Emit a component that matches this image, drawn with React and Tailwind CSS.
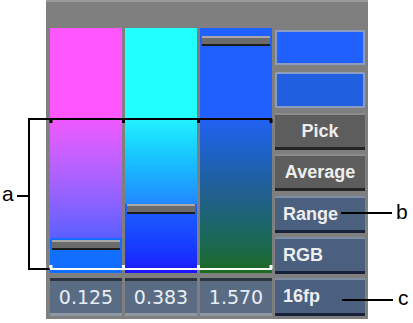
const btnFont = { fontFamily: '"Liberation Sans", Arial, sans-serif' };
const labelFont = { fontFamily: '"Liberation Sans", Arial, sans-serif' };

function Column({ handleTop, children }) {
  return (
    <div className="relative w-[72px] h-[245px] overflow-hidden flex flex-col">
      {children}
      <div
        className="absolute left-[2px] right-[2px] h-[10px] bg-[#6b6b6b] border-t-2 border-t-[#a8a8a8] border-b-2 border-b-[#1c1c1c]"
        style={{ top: handleTop }}
      />
    </div>
  );
}

function ValueBox({ value }) {
  return (
    <div
      className="w-[72px] h-[38px] bg-[#5a6c84] border-t-[3px] border-t-[#2b3440] border-b-[3px] border-b-[#8e98a4] flex items-center justify-center text-[19px] text-[#e8eef6]"
      style={{ fontFamily: '"DejaVu Sans", sans-serif' }}
    >
      {value}
    </div>
  );
}

function Button({ label, blue, center, tall }) {
  const tone = blue
    ? "bg-[#4b5f7e] border-t-[#7d8da4] border-b-[#17223a]"
    : "bg-[#5d5d5d] border-t-[#8c8c8c] border-b-[#242424]";
  return (
    <div
      className={`w-[90px] ${tall ? "h-[38px]" : "h-[37px]"} border-t-2 border-b-[3px] flex items-center text-[18px] font-bold text-[#eeeeee] ${tone} ${center ? "justify-center" : "pl-[8px]"}`}
      style={btnFont}
    >
      {label}
    </div>
  );
}

export default function App() {
  return (
    <div className="relative w-[413px] h-[323px] bg-white overflow-hidden">
      <div className="ml-[46px] w-[322px] h-[319px] bg-[#7f7f7f] border-t-2 border-t-[#9a9a9a] flex pl-[4px] pt-[26px] gap-[3px]">
        <div className="flex flex-col gap-[5px]">
          <div className="flex gap-[3px]">
            <Column handleTop="212px">
              <div className="h-[92px] bg-[#ff57ff]" />
              <div className="h-[118px] bg-gradient-to-b from-[#ef58ff] to-[#5a5eff]" />
              <div className="flex-1 bg-[#116eff]" />
            </Column>
            <Column handleTop="176px">
              <div className="h-[92px] bg-[#22ffff]" />
              <div className="h-[84px] bg-gradient-to-b from-[#22f2ff] to-[#2488ff]" />
              <div className="flex-1 bg-gradient-to-b from-[#2060ff] to-[#1c12ff]" />
            </Column>
            <Column handleTop="8px">
              <div className="h-[92px] bg-[#2060ff]" />
              <div className="flex-1 bg-gradient-to-b from-[#2060f2] via-[#225f8c] to-[#1e6a1c]" />
            </Column>
          </div>
          <div className="flex gap-[3px]">
            <ValueBox value="0.125" />
            <ValueBox value="0.383" />
            <ValueBox value="1.570" />
          </div>
        </div>
        <div className="flex flex-col pt-[2px]">
          <div className="flex flex-col gap-[7px]">
            <div className="w-[90px] h-[35px] bg-[#2060ff] border-2 border-[#8d9bbf]" />
            <div className="w-[90px] h-[36px] bg-[#2060e0] border-2 border-[#8d9bbf]" />
          </div>
          <div className="flex flex-col gap-[4px] mt-[5px]">
            <Button label="Pick" center />
            <Button label="Average" center />
            <div className="h-px" />
          </div>
          <div className="flex flex-col gap-[4px]">
            <Button label="Range" blue />
            <Button label="RGB" blue />
            <Button label="16fp" blue tall />
          </div>
        </div>
      </div>

      {/* annotation overlay: bracket a, callouts b and c */}
      <svg className="absolute inset-0 pointer-events-none" width="413" height="323" viewBox="0 0 413 323">
        <path d="M29 270 V119 H272" stroke="#000" strokeWidth="2" fill="none" />
        <path d="M51 119 v4 M123.5 119 v4 M198.5 119 v4 M271 119 v4" stroke="#000" strokeWidth="3" fill="none" />
        <path d="M28 269 H50" stroke="#000" strokeWidth="2" />
        <path d="M50 269 H272" stroke="#fff" strokeWidth="2" />
        <path d="M51 269 v-4 M123.5 269 v-4 M198.5 269 v-4 M271 269 v-4" stroke="#fff" strokeWidth="3" fill="none" />
        <path d="M17 196 H29" stroke="#000" strokeWidth="2" />
        <path d="M341 213 H392 M342 300 H393" stroke="#000" strokeWidth="2" />
      </svg>

      <div className="absolute left-[2px] top-[183px] text-[21px] leading-none text-black" style={labelFont}>
        a
      </div>
      <div className="absolute left-[396px] top-[201px] text-[21px] leading-none text-black" style={labelFont}>
        b
      </div>
      <div className="absolute left-[398px] top-[287px] text-[21px] leading-none text-black" style={labelFont}>
        c
      </div>
    </div>
  );
}
